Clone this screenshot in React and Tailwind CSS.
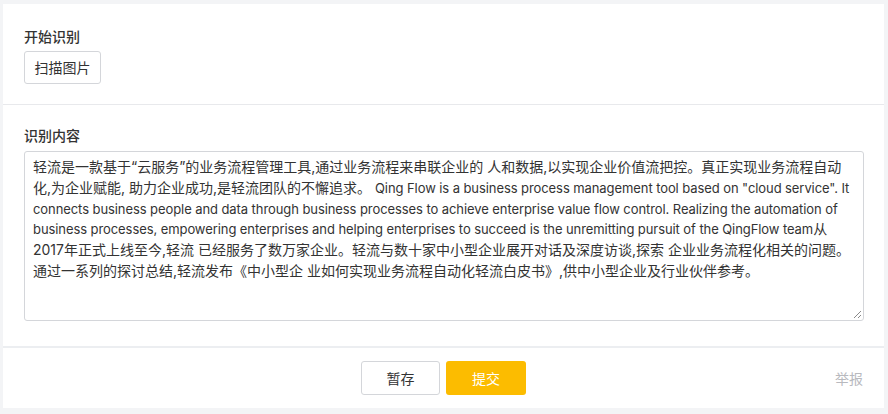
import React from 'react';

const font = { fontFamily: '"Inter", "Noto Sans CJK SC", sans-serif' };

// each row is one visual line of the field; latin runs are set a touch smaller
const rows = [
  [['zh', '轻流是一款基于“云服务”的业务流程管理工具,通过业务流程来串联企业的 人和数据,以实现企业价值流把控。真正实现业务流程自动']],
  [
    ['zh', '化,为企业赋能, 助力企业成功,是轻流团队的不懈追求。 '],
    ['en', 'Qing Flow is a business process management tool based on "cloud service". It'],
  ],
  [['en', 'connects business people and data through business processes to achieve enterprise value flow control. Realizing the automation of']],
  [
    ['en', 'business processes, empowering enterprises and helping enterprises to succeed is the unremitting pursuit of the QingFlow team'],
    ['zh', '从'],
  ],
  [['zh', '2017年正式上线至今,轻流 已经服务了数万家企业。轻流与数十家中小型企业展开对话及深度访谈,探索 企业业务流程化相关的问题。']],
  [['zh', '通过一系列的探讨总结,轻流发布《中小型企 业如何实现业务流程自动化轻流白皮书》,供中小型企业及行业伙伴参考。']],
];

const ResizeGrip = () => (
  <svg className="absolute right-[2px] bottom-[2px]" width="8" height="8" viewBox="0 0 8 8">
    <line x1="8" y1="1" x2="1" y2="8" stroke="#8a8a8a" strokeWidth="1" />
    <line x1="8" y1="5" x2="5" y2="8" stroke="#8a8a8a" strokeWidth="1" />
  </svg>
);

export default function App() {
  return (
    <div className="w-[888px] h-[414px] bg-[#f3f4f6] pt-[4px] pl-[3px] pr-[4px] overflow-hidden" style={font}>
      <div className="bg-white">
        {/* scan section */}
        <div className="px-[21px] pt-[23px] pb-[20px] border-b border-[#e8e9ec]">
          <div className="text-[14px] font-medium text-[#333] leading-[20px]">开始识别</div>
          <button className="mt-[4px] h-[33px] w-[77px] border border-[#d4d6da] rounded-[3px] text-[14px] text-[#333] bg-white">
            扫描图片
          </button>
        </div>

        {/* result section */}
        <div className="px-[21px] pt-[21px] pb-[25px] border-b-2 border-[#eceef1]">
          <div className="text-[14px] font-medium text-[#333] leading-[20px]">识别内容</div>
          <div
            role="textbox"
            aria-readonly="true"
            className="relative mt-[5px] w-[840px] h-[170px] border border-[#d4d6da] rounded-[3px] px-[8px] py-[5px] text-[14px] leading-[20.8px] text-[#333] whitespace-pre overflow-hidden"
          >
            {rows.map((row, i) => (
              <div key={i}>
                {row.map(([lang, text], j) =>
                  lang === 'en' ? (
                    <span key={j} className="text-[13px] tracking-[-0.08px]">{text}</span>
                  ) : (
                    <span key={j}>{text}</span>
                  )
                )}
              </div>
            ))}
            <ResizeGrip />
          </div>
        </div>

        {/* footer */}
        <div className="relative h-[60px] flex items-center justify-center gap-[6px]">
          <button className="h-[34px] w-[79px] border border-[#d4d6da] rounded-[3px] text-[14px] text-[#333] bg-white">
            暂存
          </button>
          <button className="h-[34px] w-[80px] rounded-[3px] text-[14px] text-white bg-[#fcbc00]">
            提交
          </button>
          <span className="absolute right-[21px] top-[20px] text-[14px] text-[#b8b9be]">举报</span>
        </div>
      </div>
    </div>
  );
}
